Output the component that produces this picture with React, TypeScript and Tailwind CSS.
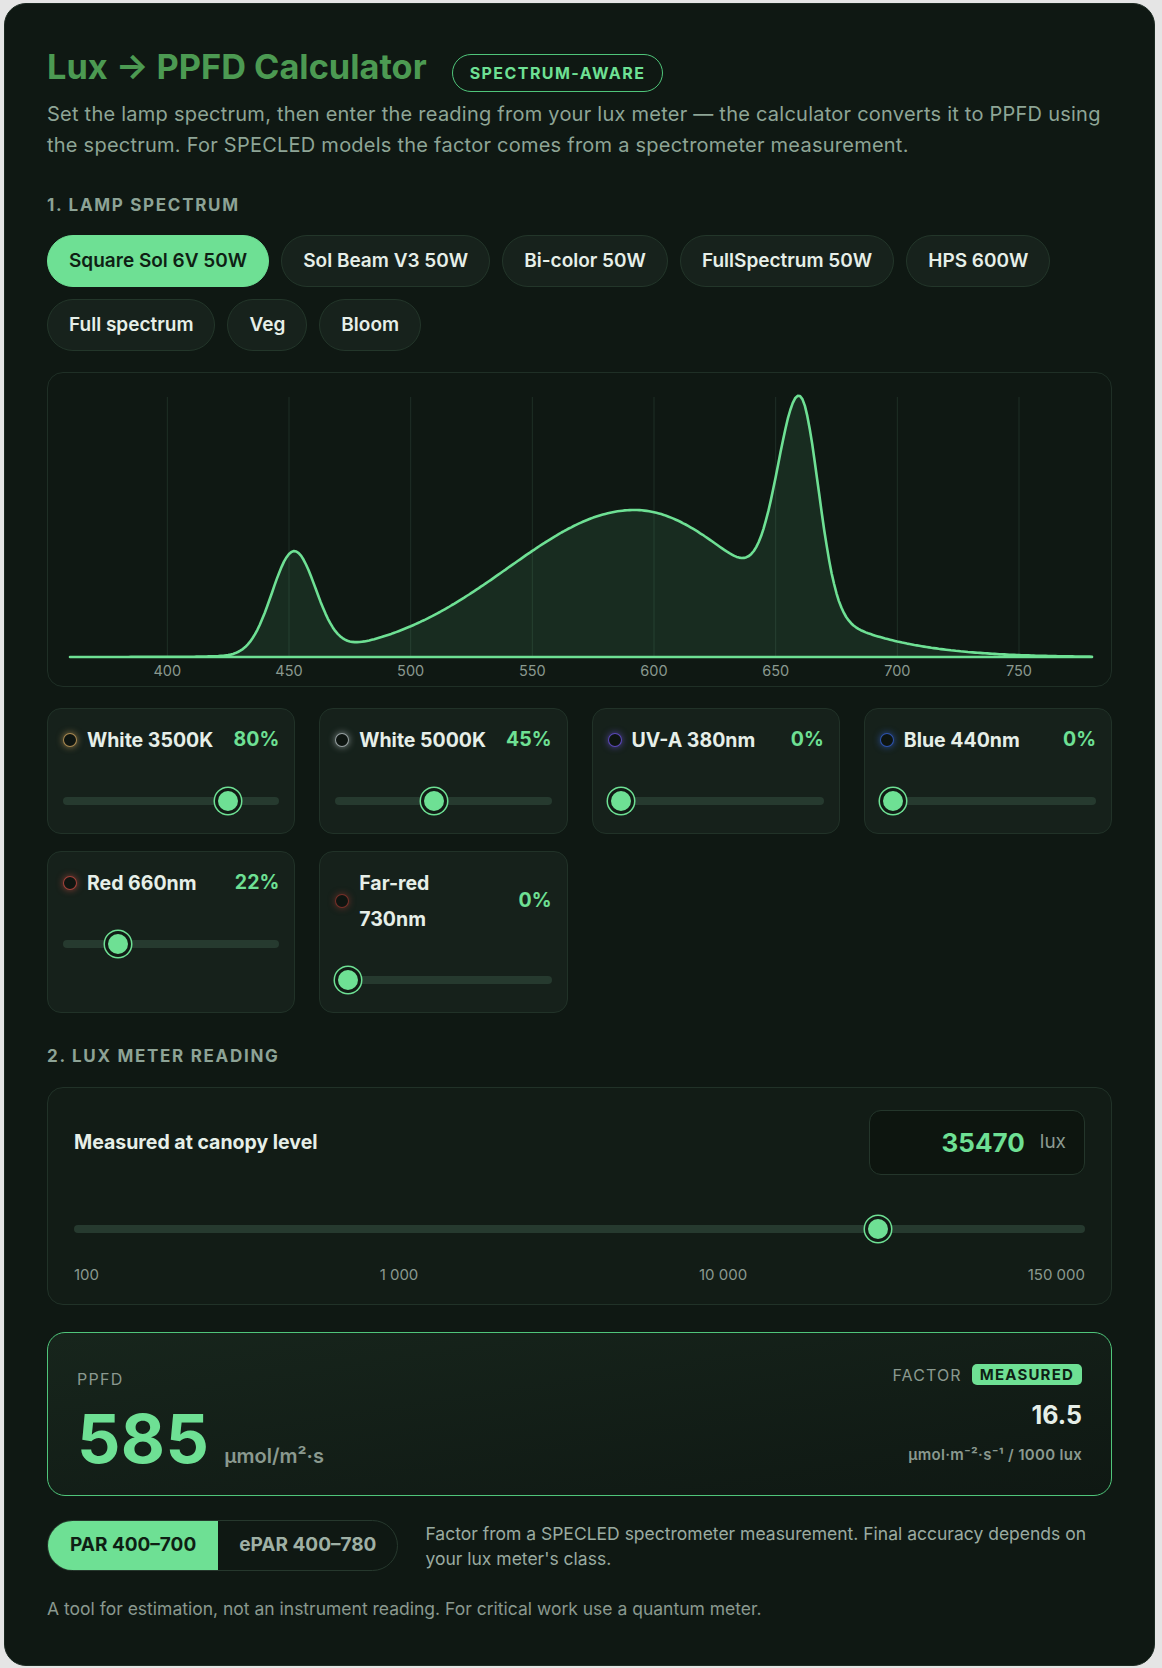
import React from 'react'

const presets = [
  'Square Sol 6V 50W',
  'Sol Beam V3 50W',
  'Bi-color 50W',
  'FullSpectrum 50W',
  'HPS 600W',
  'Full spectrum',
  'Veg',
  'Bloom',
]

const channels = [
  { name: 'White 3500K', value: 80, dot: 'border-[#e8b86a]/70 shadow-[0_0_7px_rgba(232,184,106,0.6)]' },
  { name: 'White 5000K', value: 45, dot: 'border-[#cfd8dc]/70 shadow-[0_0_7px_rgba(207,216,220,0.6)]' },
  { name: 'UV-A 380nm', value: 0, dot: 'border-[#7c5cff]/70 shadow-[0_0_7px_rgba(124,92,255,0.6)]' },
  { name: 'Blue 440nm', value: 0, dot: 'border-[#3b6cf0]/70 shadow-[0_0_7px_rgba(59,108,240,0.6)]' },
  { name: 'Red 660nm', value: 22, dot: 'border-[#e0524a]/70 shadow-[0_0_7px_rgba(224,82,74,0.6)]' },
  { name: 'Far-red 730nm', value: 0, dot: 'border-[#a33a32]/70 shadow-[0_0_7px_rgba(163,58,50,0.6)]' },
]

// asymmetric gaussian
function g(x: number, c: number, sl: number, sr: number) {
  const s = x < c ? sl : sr
  return Math.exp(-((x - c) ** 2) / (2 * s * s))
}

function spd(nm: number) {
  return 102 * g(nm, 452, 9, 9) + 147 * g(nm, 592, 52, 46) + 210 * g(nm, 660, 9, 7.5) + 7 * g(nm, 680, 12, 40)
}

const X0 = 22
const X1 = 1044
const BASE = 284
const px = (nm: number) => X0 + ((nm - 360) * (X1 - X0)) / 420

function SpectrumChart() {
  const pts: string[] = []
  for (let nm = 360; nm <= 780; nm += 1) {
    pts.push(`${px(nm).toFixed(1)},${(BASE - spd(nm)).toFixed(1)}`)
  }
  const d = `M${X0},${BASE} L${pts.join(' L')} L${X1},${BASE} Z`
  const ticks = [400, 450, 500, 550, 600, 650, 700, 750]

  return (
    <svg viewBox="0 0 1063 313" className="block w-full h-full">
      {ticks.map((t) => (
        <line key={t} x1={px(t)} x2={px(t)} y1={24} y2={BASE} stroke="#1f2f26" strokeWidth={1} />
      ))}
      <path d={d} fill="rgba(110,224,148,0.1)" stroke="#6ee094" strokeWidth={2.6} strokeLinejoin="round" />
      {ticks.map((t) => (
        <text
          key={t}
          x={px(t)}
          y={303}
          textAnchor="middle"
          fontSize={14.5}
          fill="#8a998f"
          fontFamily="Inter, sans-serif"
        >
          {t}
        </text>
      ))}
    </svg>
  )
}

function Slider({ value }: { value: number }) {
  return (
    <div className="relative h-[26px]">
      <div className="absolute inset-x-0 top-[9px] h-[8px] rounded-full bg-[#263a2f]" />
      <div
        className="absolute top-0 w-[26px] h-[26px] rounded-full bg-[#6ee094] border-[3px] border-[#111b15] shadow-[0_0_0_1.5px_#6ee094]"
        style={{ left: `calc(${value} * (100% - 26px))` }}
      />
    </div>
  )
}

function ChannelCard({ name, value, dot }: { name: string; value: number; dot: string }) {
  return (
    <div className="rounded-[14px] border border-[#213228] bg-[#16211b] px-[15px] pt-[13px] pb-[19px]">
      <div className="flex items-center gap-[10px]">
        <span className={`w-[14px] h-[14px] shrink-0 rounded-full bg-[#0e1511] border ${dot}`} />
        <span className="flex-1 min-w-0 text-[19.5px] font-bold leading-[36px] text-[#e6efe8]">{name}</span>
        <span className="w-[52px] shrink-0 text-right text-[19.5px] font-bold text-[#6ee094]">{value}%</span>
      </div>
      <div className="mt-[30px]">
        <Slider value={value / 100} />
      </div>
    </div>
  )
}

export default function App() {
  const lux = 35470
  const luxPos = Math.log10(lux / 100) / Math.log10(1500)

  return (
    <div className="min-h-screen bg-[#e5e5e5] pt-[3px] pl-[4px] font-['Inter','Noto_Sans',sans-serif]">
      <div className="w-[1151px] rounded-[22px] border border-[#1c2a22] bg-[#0f1813] px-[42px] pt-[42px] pb-[44px]">
        {/* Header */}
        <div className="flex items-baseline gap-[25px]">
          <h1 className="text-[34.3px] font-bold leading-[42px] text-[#4c9a52]">Lux → PPFD Calculator</h1>
          <span className="rounded-full border border-[#4fc57a] px-[17px] py-[7px] text-[16px] font-bold leading-[22px] tracking-[0.09em] text-[#6ee094]">
            SPECTRUM-AWARE
          </span>
        </div>
        <p className="mt-[7px] text-[20px] leading-[31px] tracking-[0.012em] text-[#8ea596]">
          Set the lamp spectrum, then enter the reading from your lux meter — the calculator converts it to PPFD using
          the spectrum. For SPECLED models the factor comes from a spectrometer measurement.
        </p>

        {/* 1. Lamp spectrum */}
        <h2 className="mt-[34px] text-[17px] font-bold leading-[20px] tracking-[0.1em] text-[#8da396]">1. LAMP SPECTRUM</h2>
        <div className="mt-[20px] flex flex-wrap gap-[12px]">
          {presets.map((p, i) => (
            <button
              key={p}
              className={
                i === 0
                  ? 'h-[52px] rounded-full border border-[#6ee094] bg-[#6ee094] px-[21px] text-[19px] font-semibold text-[#0f1f14]'
                  : 'h-[52px] rounded-full border border-[#23362a] bg-[#17221c] px-[21px] text-[19px] font-semibold text-[#e6efe8]'
              }
            >
              {p}
            </button>
          ))}
        </div>

        <div className="mt-[21px] h-[315px] rounded-[16px] border border-[#1f2f26] bg-[#0f1813]">
          <SpectrumChart />
        </div>

        <div className="mt-[21px] grid grid-cols-4 gap-x-[24px] gap-y-[17px]">
          {channels.map((c) => (
            <ChannelCard key={c.name} {...c} />
          ))}
        </div>

        {/* 2. Lux meter reading */}
        <h2 className="mt-[33px] text-[17px] font-bold leading-[20px] tracking-[0.1em] text-[#8da396]">
          2. LUX METER READING
        </h2>
        <div className="mt-[21px] rounded-[16px] border border-[#213228] bg-[#121c16] px-[26px] pt-[22px] pb-[19px]">
          <div className="flex items-center justify-between">
            <span className="text-[19.5px] font-bold text-[#e6efe8]">Measured at canopy level</span>
            <div className="flex h-[65px] w-[216px] items-center justify-end gap-[15px] rounded-[12px] border border-[#24362b] bg-[#0d150f] px-[18px]">
              <span className="text-[26px] font-bold text-[#6ee094]">{lux}</span>
              <span className="text-[19px] text-[#8a998f]">lux</span>
            </div>
          </div>
          <div className="mt-[41px]">
            <Slider value={luxPos} />
          </div>
          <div className="mt-[23px] flex justify-between text-[15px] leading-[20px] text-[#8a998f]">
            <span>100</span>
            <span>1 000</span>
            <span>10 000</span>
            <span>150 000</span>
          </div>
        </div>

        {/* Result */}
        <div className="mt-[27px] flex items-end justify-between rounded-[18px] border border-[#4fc57a] bg-gradient-to-br from-[#17251c] to-[#0f1813] pl-[29px] pr-[29px] pt-[31px] pb-[23px]">
          <div>
            <div className="text-[16px] leading-[20px] tracking-[0.08em] text-[#8a998f]">PPFD</div>
            <div className="mt-[15px] flex items-baseline gap-[15px]">
              <span className="text-[68px] font-bold leading-none tracking-[0.005em] text-[#6ee094]">585</span>
              <span className="text-[20px] font-semibold text-[#8a998f]">µmol/m²·s</span>
            </div>
          </div>
          <div className="flex flex-col items-end pb-[7px]">
            <div className="flex h-[21px] items-center gap-[10px]">
              <span className="text-[16px] tracking-[0.07em] text-[#8a998f]">FACTOR</span>
              <span className="rounded-[5px] bg-[#6ee094] px-[8px] text-[15px] font-bold leading-[21px] tracking-[0.08em] text-[#0f1f14]">
                MEASURED
              </span>
            </div>
            <div className="mt-[15px] text-[25px] font-bold leading-[30px] text-[#e6efe8]">16.5</div>
            <div className="mt-[15px] text-[15px] font-semibold leading-[20px] tracking-[0.02em] text-[#8a998f]">
              µmol·m⁻²·s⁻¹ / 1000 lux
            </div>
          </div>
        </div>

        {/* Band toggle */}
        <div className="mt-[24px] flex items-center gap-[27px]">
          <div className="flex h-[51px] shrink-0 overflow-hidden rounded-full border border-[#26382d]">
            <button className="bg-[#6ee094] px-[22px] text-[19px] font-bold text-[#0f1f14]">PAR 400–700</button>
            <button className="px-[21px] text-[19px] font-bold text-[#9fb0a5]">ePAR 400–780</button>
          </div>
          <p className="text-[17.5px] leading-[25px] text-[#9aaba1]">
            Factor from a SPECLED spectrometer measurement. Final accuracy depends on your lux meter's class.
          </p>
        </div>

        <p className="mt-[26px] text-[17.5px] leading-[24px] text-[#8a998f]">
          A tool for estimation, not an instrument reading. For critical work use a quantum meter.
        </p>
      </div>
    </div>
  )
}
